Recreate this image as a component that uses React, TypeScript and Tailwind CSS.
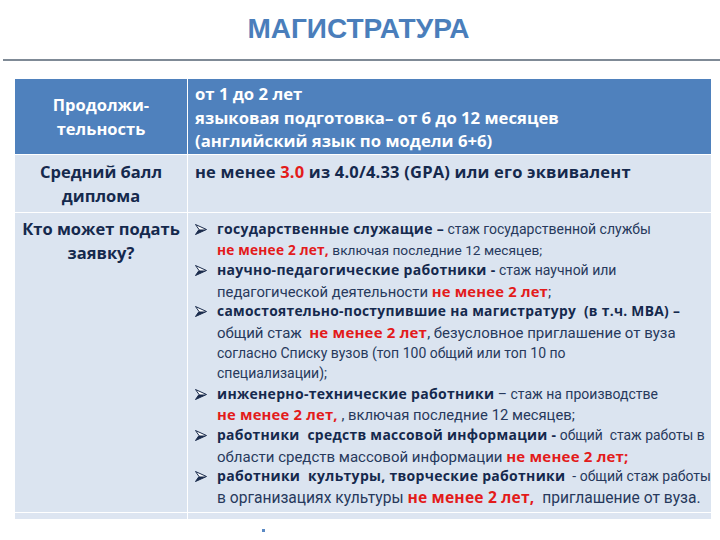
const font = { fontFamily: "Roboto, 'Noto Sans', sans-serif" };
const bold = { fontFamily: "'Open Sans', 'Noto Sans', sans-serif" };

function Arrow() {
  return (
    <svg width="12" height="11" viewBox="0 0 12 11" className="shrink-0 mt-[5px]">
      <path d="M0.5 0.5 L11.5 5.5 L0.5 10.5 L4 5.5 Z" fill="#ffffff" stroke="#1a2b4c" strokeWidth="1" strokeLinejoin="round" />
      <path d="M4 5.5 L11.5 5.5 L0.5 10.5 Z" fill="#1a2b4c" />
    </svg>
  );
}

function B({ children }: { children: React.ReactNode }) {
  return (
    <span className="font-bold text-[#15294d] tracking-[0.3px]" style={bold}>
      {children}
    </span>
  );
}

function R({ children }: { children: React.ReactNode }) {
  return (
    <span className="font-bold text-[#e31b1b] tracking-[0.2px]" style={bold}>
      {children}
    </span>
  );
}

type Line = { text: React.ReactNode; cls?: string };

function Item({ lines }: { lines: Line[] }) {
  return (
    <div className="flex gap-[10px]">
      <Arrow />
      <div>
        {lines.map((l, i) => (
          <div key={i} className={"whitespace-pre h-[20.6px] " + (l.cls || "")}>
            {l.text}
          </div>
        ))}
      </div>
    </div>
  );
}

export default function App() {
  return (
    <div className="w-[720px] h-[540px] bg-white relative overflow-hidden" style={font}>
      <div
        className="pt-[13px] pr-[3px] text-center text-[28px] leading-[32px] font-bold text-[#4a7ebb]"
        style={{ fontFamily: "'Liberation Sans', Arial, sans-serif" }}
      >
        МАГИСТРАТУРА
      </div>
      <div className="mt-[14px] ml-[3px] h-[2px] bg-[#7f8a96]" />

      <div className="mt-[18px] ml-[15px] w-[696px] grid grid-cols-[172px_1fr] gap-px bg-white">
        {/* header row */}
        <div
          className="h-[75px] bg-[#4f81bd] flex items-center justify-center text-center text-white font-bold text-[16.5px] leading-[24px] pt-[1px]"
          style={bold}
        >
          Продолжи-
          <br />
          тельность
        </div>
        <div className="h-[75px] bg-[#4f81bd] text-white font-bold text-[16.7px] leading-[23.5px] pl-[7px] pt-[3px]" style={bold}>
          <div>от 1 до 2 лет</div>
          <div>языковая подготовка– от 6 до 12 месяцев</div>
          <div>(английский язык по модели 6+6)</div>
        </div>

        {/* GPA row */}
        <div
          className="h-[57px] bg-[#dbe4f0] flex items-center justify-center text-center text-[#15294d] font-bold text-[16.5px] leading-[24px]"
          style={bold}
        >
          Средний балл
          <br />
          диплома
        </div>
        <div
          className="h-[57px] bg-[#dbe4f0] text-[#15294d] font-bold text-[16.5px] leading-[22px] tracking-[0.2px] pl-[7px] pt-[6px]"
          style={bold}
        >
          не менее <span className="text-[#e31b1b]">3.0</span> из 4.0/4.33 (GPA) или его эквивалент
        </div>

        {/* who can apply */}
        <div
          className="h-[299px] bg-[#dbe4f0] text-center text-[#15294d] font-bold text-[16.5px] leading-[24px] pt-[4px]"
          style={bold}
        >
          Кто может подать
          <br />
          заявку?
        </div>
        <div className="h-[299px] bg-[#dbe4f0] text-[#27395c] text-[14px] leading-[20.6px] pl-[7px] pt-[6px]">
          <Item
            lines={[
              {
                text: (
                  <>
                    <B>государственные служащие –</B> стаж государственной службы
                  </>
                ),
              },
              {
                text: (
                  <>
                    <R>не менее 2 лет,</R> включая последние 12 месяцев;
                  </>
                ),
                cls: "text-[13.7px]",
              },
            ]}
          />
          <Item
            lines={[
              {
                text: (
                  <>
                    <B>научно-педагогические работники -</B> стаж научной или
                  </>
                ),
              },
              {
                text: (
                  <>
                    педагогической деятельности <R>не менее 2 лет</R>;
                  </>
                ),
                cls: "text-[14.8px]",
              },
            ]}
          />
          <Item
            lines={[
              {
                text: (
                  <>
                    <B>самостоятельно-поступившие на магистратуру  (в т.ч. MBA) –</B>
                  </>
                ),
                cls: "text-[13.8px]",
              },
              {
                text: (
                  <>
                    общий стаж  <R>не менее 2 лет</R>, безусловное приглашение от вуза
                  </>
                ),
                cls: "text-[15px]",
              },
              { text: <>согласно Списку вузов (топ 100 общий или топ 10 по</> },
              { text: <>специализации);</> },
            ]}
          />
          <Item
            lines={[
              {
                text: (
                  <>
                    <B>инженерно-технические работники</B> – стаж на производстве
                  </>
                ),
              },
              {
                text: (
                  <>
                    <R>не менее 2 лет,</R> , включая последние 12 месяцев;
                  </>
                ),
                cls: "text-[14.8px]",
              },
            ]}
          />
          <Item
            lines={[
              {
                text: (
                  <>
                    <B>работники  средств массовой информации -</B> общий  стаж работы в
                  </>
                ),
                cls: "text-[13.9px]",
              },
              {
                text: (
                  <>
                    области средств массовой информации <R>не менее 2 лет;</R>
                  </>
                ),
                cls: "text-[15px]",
              },
            ]}
          />
          <Item
            lines={[
              {
                text: (
                  <>
                    <B>работники  культуры, творческие работники</B>  - общий стаж работы
                  </>
                ),
              },
              {
                text: (
                  <>
                    в организациях культуры <R>не менее 2 лет,</R>  приглашение от вуза.
                  </>
                ),
                cls: "text-[15.6px]",
              },
            ]}
          />
        </div>

        {/* bottom strip */}
        <div className="h-[6px] bg-[#dde5f1]" />
        <div className="h-[6px] bg-[#dde5f1]" />
      </div>

      <div className="absolute left-[262px] top-[529px] w-[3px] h-[3px] bg-[#5b8ac4]" />
    </div>
  );
}
